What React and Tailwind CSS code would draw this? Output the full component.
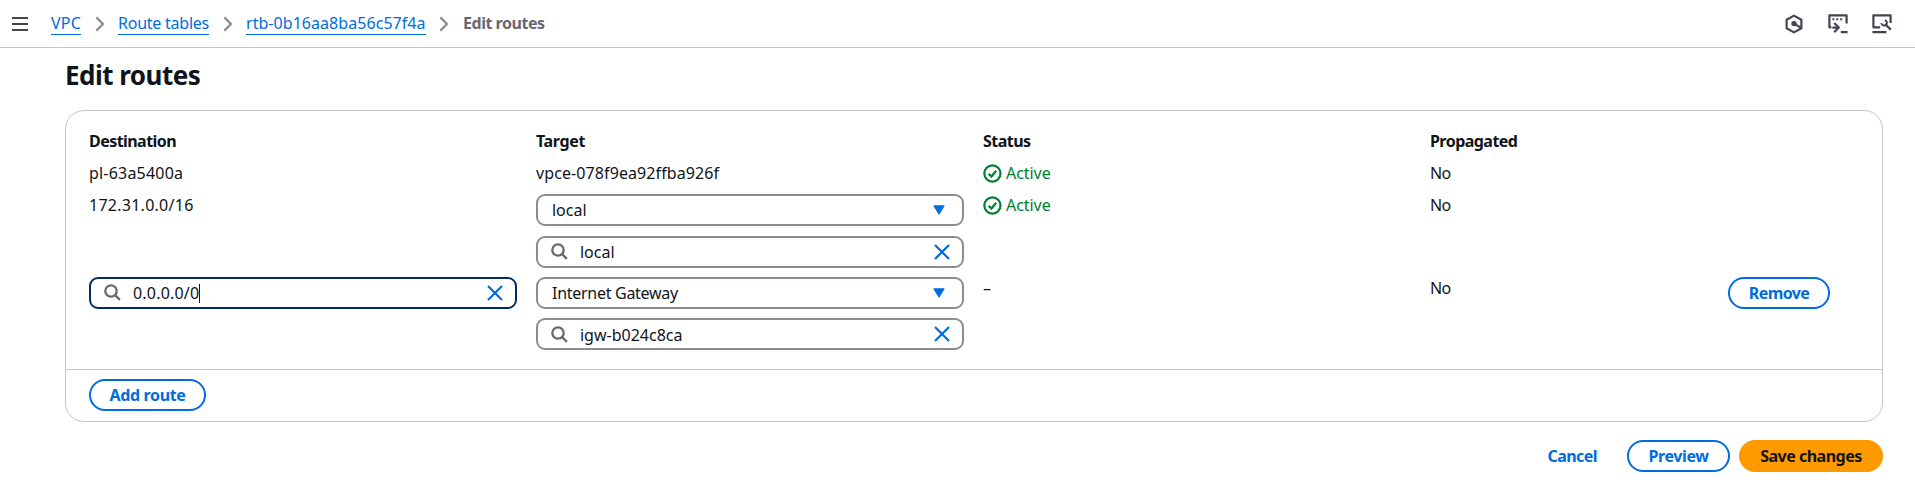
import React from "react";

function Chevron({ className }) {
  return (
    <svg className={className} width="10" height="16" viewBox="0 0 10 16" fill="none" stroke="#8c8c94" strokeWidth="2.3">
      <path d="M1.3 1.3 8 8l-6.7 6.7" />
    </svg>
  );
}

function SearchIcon() {
  return (
    <svg className="shrink-0" width="17" height="17" viewBox="0 0 17 17" fill="none" stroke="#656871" strokeWidth="2.3">
      <circle cx="7" cy="7" r="5.7" />
      <path d="m11 11 4.9 4.9" />
    </svg>
  );
}

function ClearIcon() {
  return (
    <svg className="shrink-0" width="16" height="16" viewBox="0 0 16 16" fill="none" stroke="#006ce0" strokeWidth="2.2">
      <path d="m1 1 14 14M15 1 1 15" />
    </svg>
  );
}

function Status() {
  return (
    <div className="flex h-[23px] items-center gap-[4px] text-[#00802f]">
      <svg width="19" height="19" viewBox="0 0 19 19" fill="none" stroke="currentColor" strokeWidth="2.2">
        <circle cx="9.4" cy="9.5" r="8.1" />
        <path d="m5.6 9.7 2.8 2.8 4.8-5.8" />
      </svg>
      <span className="tracking-[-0.05px]">Active</span>
    </div>
  );
}

function SelectBox({ children }) {
  return (
    <div className="flex h-8 items-center justify-between rounded-[9px] border-2 border-[#8c8c94] pl-[14px] pr-[17.5px]">
      <div className="pt-[1px]">{children}</div>
      <svg width="12" height="10" viewBox="0 0 12 10" fill="#006ce0" stroke="#006ce0" strokeWidth="1" strokeLinejoin="round">
        <path d="M.8.8h10.4L6 9.2z" />
      </svg>
    </div>
  );
}

function SearchBox({ active, children }) {
  return (
    <div
      className={`flex h-8 items-center rounded-[9px] border-2 pl-[13px] pr-[12.5px] ${
        active ? "border-[#002b66]" : "border-[#8c8c94]"
      }`}
    >
      <SearchIcon />
      <div className="ml-[12px] flex flex-1 items-center pt-[2px]">{children}</div>
      <ClearIcon />
    </div>
  );
}

export default function App() {
  return (
    <div className="h-[498px] w-full bg-white font-['Noto_Sans','Open_Sans',sans-serif] text-[16px] leading-[23px] whitespace-nowrap text-[#0f141a]">
      <header className="flex h-12 items-center justify-between border-b border-[#c6c6cd] pr-[23px] pl-3 text-[#424650]">
        <nav className="flex items-center">
          <svg width="16" height="16" viewBox="0 0 16 16" fill="none" stroke="currentColor" strokeWidth="2.1">
            <path d="M0 2h16M0 8h16M0 14h16" />
          </svg>
          <a className="ml-[23px] w-[30px] border-b border-[#006ce0] leading-[21px] tracking-[0.2px] text-[#006ce0]">VPC</a>
          <Chevron className="ml-[14px]" />
          <a className="ml-[13px] w-[91px] border-b border-[#006ce0] leading-[21px] tracking-[-0.24px] text-[#006ce0]">Route tables</a>
          <Chevron className="ml-[14px]" />
          <a className="ml-[13px] w-[180px] border-b border-[#006ce0] leading-[21px] tracking-[0.05px] text-[#006ce0]">rtb-0b16aa8ba56c57f4a</a>
          <Chevron className="ml-[13px]" />
          <span className="ml-[14px] font-bold tracking-[-0.47px] text-[#656871]">Edit routes</span>
        </nav>
        <div className="flex items-center gap-[24.5px]">
          <svg width="18" height="20" viewBox="0 0 18 20" fill="none" stroke="currentColor" strokeWidth="2.2" strokeLinejoin="round">
            <path d="M9 1.6 16.4 5.7v8.6L9 18.4l-7.4-4.1V5.7z" />
            <path d="m9 9.6 7 4.2" />
            <circle cx="9" cy="9.6" r="1.6" fill="currentColor" />
          </svg>
          <svg width="20" height="20" viewBox="0 0 20 20" fill="none" stroke="currentColor" strokeWidth="2.2" strokeLinejoin="round">
            <path d="M3.4 13.3h-2V1.4h17.2v8.2M4.4 13.6h6M6.2 8.9l4.6 4.7-4.6 4.7M12.8 18.2h6.8" />
            <path d="M4.4 5.3h2M8.3 5.3h2M12.2 5.3h2" strokeWidth="2" />
          </svg>
          <svg width="20" height="20" viewBox="0 0 20 20" fill="none" stroke="currentColor" strokeWidth="2.2" strokeLinejoin="round">
            <path d="M18.6 9V1.4H1.4v11.9h6.8M.4 18.2h14" />
            <path d="m14 11 4.8 4.7" strokeWidth="2.4" />
            <path d="M9.3 9.1c.5 2.3 2.8 3.1 4.5 1.8s1.4-3.8-.8-4.8" strokeWidth="2" />
          </svg>
        </div>
      </header>

      <main className="pr-[32px] pl-[65px]">
        <h1 className="mt-[10px] h-[35px] text-[26px] leading-[35px] font-bold tracking-[-0.52px]">Edit routes</h1>

        <section className="mt-[17px] rounded-[19px] border border-[#c6c6cd]">
          <div className="grid h-[258px] grid-cols-[428.4px_428.4px_428.4px_279.5px_102px] content-start gap-x-[18.6px] gap-y-[9.2px] pt-[19.05px] pl-[23px]">
            <div className="font-bold tracking-[-0.55px]">Destination</div>
            <div className="font-bold tracking-[-0.35px]">Target</div>
            <div className="font-bold tracking-[-0.53px]">Status</div>
            <div className="col-span-2 font-bold tracking-[-0.53px]">Propagated</div>

            <div className="tracking-[0.2px]">pl-63a5400a</div>
            <div className="tracking-[0.1px]">vpce-078f9ea92ffba926f</div>
            <Status />
            <div className="col-span-2 tracking-[-0.7px]">No</div>

            <div className="tracking-[0.26px]">172.31.0.0/16</div>
            <div className="flex flex-col gap-[9.3px]">
              <SelectBox>
                <span>local</span>
              </SelectBox>
              <SearchBox>
                <span>local</span>
              </SearchBox>
            </div>
            <Status />
            <div className="col-span-2 tracking-[-0.7px]">No</div>

            <div>
              <SearchBox active>
                <span className="tracking-[0.2px]">0.0.0.0/0</span>
                <span className="h-[19px] w-px bg-[#0f141a]" />
              </SearchBox>
            </div>
            <div className="flex flex-col gap-[9.3px]">
              <SelectBox>
                <span className="tracking-[-0.28px]">Internet Gateway</span>
              </SelectBox>
              <SearchBox>
                <span>igw-b024c8ca</span>
              </SearchBox>
            </div>
            <div>–</div>
            <div className="tracking-[-0.7px]">No</div>
            <button className="h-8 rounded-full border-2 border-[#006ce0] pt-px font-bold tracking-[-0.6px] text-[#006ce0]">Remove</button>
          </div>
          <div className="h-[52px] border-t border-[#c6c6cd] pt-[9px] pl-[23px]">
            <button className="h-8 w-[117px] rounded-full border-2 border-[#006ce0] pt-px font-bold tracking-[-0.35px] text-[#006ce0]">Add route</button>
          </div>
        </section>

        <div className="mt-[18px] flex items-center justify-end font-bold">
          <button className="mr-[30px] h-8 tracking-[-0.55px] text-[#006ce0]">Cancel</button>
          <button className="mr-[9px] h-8 w-[103px] rounded-full border-2 border-[#006ce0] pt-px tracking-[-0.4px] text-[#006ce0]">Preview</button>
          <button className="h-8 w-[144px] rounded-full bg-[#ff9900] pt-px tracking-[-0.5px]">Save changes</button>
        </div>
      </main>
    </div>
  );
}
